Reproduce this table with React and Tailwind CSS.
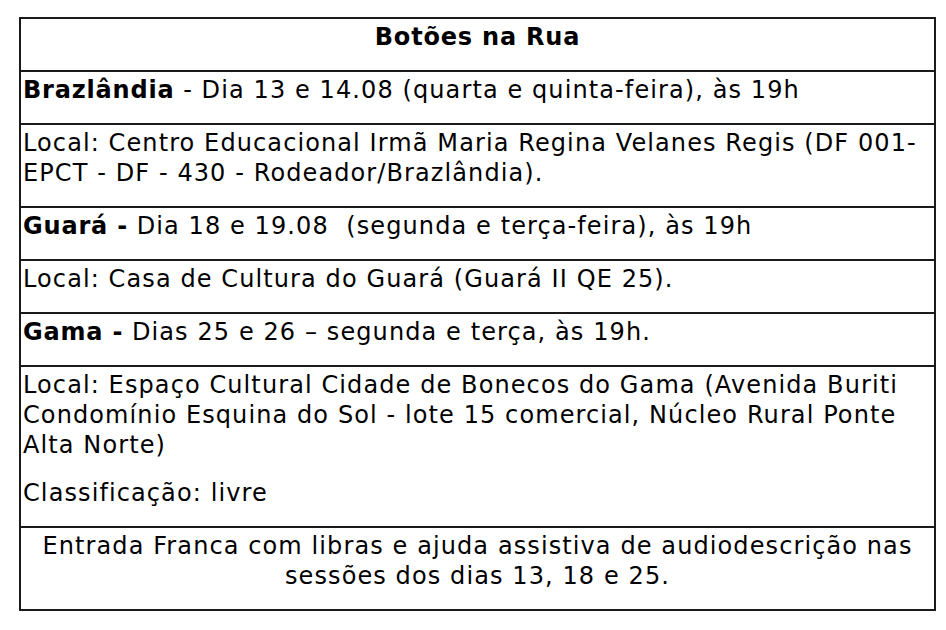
export default function App() {
  const cell = "border-t-2 border-[#1a1a1a] px-[2px] pt-[3px]";
  const p = "mb-[18px] leading-[30px]";

  return (
    <div className="min-h-screen bg-white pt-[17px] pl-[19px] text-black text-[24px] tracking-[1.1px] font-['DejaVu_Sans',Verdana,sans-serif]">
      <div className="w-[917px] border-2 border-[#1a1a1a]">
        <div className="px-[2px] pt-[3px] text-center">
          <p className={`${p} font-bold tracking-[0.8px]`}>Botões na Rua</p>
        </div>

        <div className={cell}>
          <p className={p}>
            <b className="tracking-[0.8px]">Brazlândia</b> - Dia 13 e 14.08 (quarta e quinta-feira), às 19h
          </p>
        </div>

        <div className={cell}>
          <p className={p}>
            Local: Centro Educacional Irmã Maria Regina Velanes Regis (DF 001-EPCT - DF - 430 - Rodeador/Brazlândia).
          </p>
        </div>

        <div className={cell}>
          <p className={`${p} whitespace-pre`}>
            <b className="tracking-[0.8px]">Guará -</b> Dia 18 e 19.08  (segunda e terça-feira), às 19h
          </p>
        </div>

        <div className={cell}>
          <p className={p}>Local: Casa de Cultura do Guará (Guará II QE 25).</p>
        </div>

        <div className={cell}>
          <p className={p}>
            <b className="tracking-[0.8px]">Gama -</b> Dias 25 e 26 – segunda e terça, às 19h.
          </p>
        </div>

        <div className={cell}>
          <p className={p}>
            Local: Espaço Cultural Cidade de Bonecos do Gama (Avenida Buriti Condomínio Esquina do Sol - lote 15 comercial, Núcleo Rural Ponte Alta Norte)
          </p>
          <p className={p}>Classificação: livre</p>
        </div>

        <div className={`${cell} text-center`}>
          <p className={p}>
            Entrada Franca com libras e ajuda assistiva de audiodescrição nas sessões dos dias 13, 18 e 25.
          </p>
        </div>
      </div>
    </div>
  );
}
